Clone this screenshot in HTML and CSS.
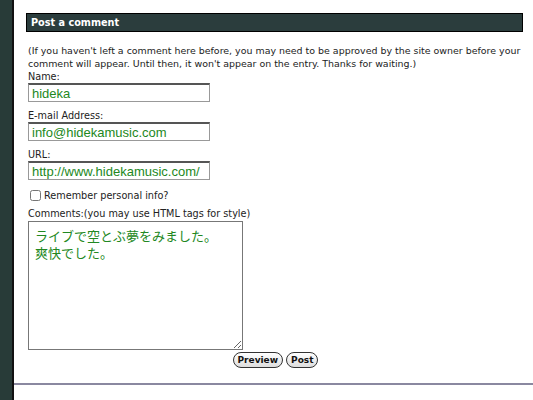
FILE: index.html
```html
<!DOCTYPE html>
<html lang="en">
<head>
    <meta charset="UTF-8">
    <title>Post a comment</title>
    <link rel="stylesheet" href="styles.css">
</head>
<body>
    <div class="page">
        <div class="sidebar"></div>
        <div class="main">
            <h2 class="comment-head">Post a comment</h2>

            <form class="comment-form">
                <p class="notice">(If you haven't left a comment here before, you may need to be approved by the site owner before your comment will appear. Until then, it won't appear on the entry. Thanks for waiting.)</p>

                <label for="author">Name:</label>
                <input type="text" id="author" class="field" value="hideka">

                <label for="email">E-mail Address:</label>
                <input type="text" id="email" class="field" value="info@hidekamusic.com">

                <label for="url">URL:</label>
                <input type="text" id="url" class="field" value="http://www.hidekamusic.com/">

                <div class="remember">
                    <input type="checkbox" id="bakecookie">
                    <label for="bakecookie">Remember personal info?</label>
                </div>

                <label for="text">Comments:(you may use HTML tags for style)</label>
                <textarea id="text" class="comment-text">ライブで空とぶ夢をみました。
爽快でした。</textarea>

                <div class="buttons">
                    <button type="button" class="btn">Preview</button>
                    <button type="button" class="btn">Post</button>
                </div>
            </form>

            <div class="rule"></div>
        </div>
    </div>
</body>
</html>
```

FILE: styles.css
```css
/* Basic styling */
body {
    margin: 0;
    background-color: #fff;
    font-family: "DejaVu Sans", Verdana, sans-serif;
    font-size: 9.7px;
    color: #222;
}
.page {
    display: flex;
    height: 400px;
}
.sidebar {
    width: 12px;
    background-color: #283b38;
    border-right: 2px solid #111;
}
.main {
    flex: 1;
    padding: 13px 10px 0 12px;
}
/* Section header */
.comment-head {
    margin: 0;
    height: 17px;
    line-height: 17px;
    padding-left: 4px;
    background-color: #2b3d3d;
    border: 1px solid #000;
    color: #fff;
    font-size: 9.7px;
    font-weight: bold;
}
/* Form styling */
.comment-form {
    padding-left: 2px;
}
.notice {
    margin: 12px 0 0 0;
    line-height: 13px;
    font-size: 9.45px;
}
.comment-form label {
    display: block;
    line-height: 13px;
}
.field {
    display: block;
    box-sizing: border-box;
    width: 182px;
    height: 19px;
    margin: 0 0 7px 0;
    padding: 0 3px;
    border: 1px solid #999;
    border-top: 2px solid #555;
    font-family: "Liberation Sans", Arial, sans-serif;
    font-size: 13px;
    color: #228822;
}
.remember {
    display: flex;
    align-items: center;
    margin: 9px 0 5px 0;
}
.remember input {
    margin: 0 3px 0 2px;
    width: 11px;
    height: 11px;
}
.remember label {
    display: inline;
}
.comment-text {
    display: block;
    box-sizing: border-box;
    width: 215px;
    height: 129px;
    margin: 1px 0 0 0;
    padding: 5px 6px;
    border: 1px solid #777;
    resize: both;
    font-family: "Noto Sans CJK JP", sans-serif;
    font-size: 13px;
    line-height: 17px;
    color: #228822;
}
.buttons {
    display: flex;
    justify-content: center;
    gap: 3px;
    margin-top: 2px;
}
.btn {
    height: 16px;
    padding: 0 4px;
    border: 1px solid #333;
    border-radius: 8px;
    background: linear-gradient(#fff, #ddd);
    font-family: "DejaVu Sans", Verdana, sans-serif;
    font-size: 9px;
    font-weight: bold;
    color: #111;
    line-height: 14px;
}
.rule {
    height: 2px;
    background-color: #8a88a0;
    margin: 15px -10px 0 -12px;
}
```
